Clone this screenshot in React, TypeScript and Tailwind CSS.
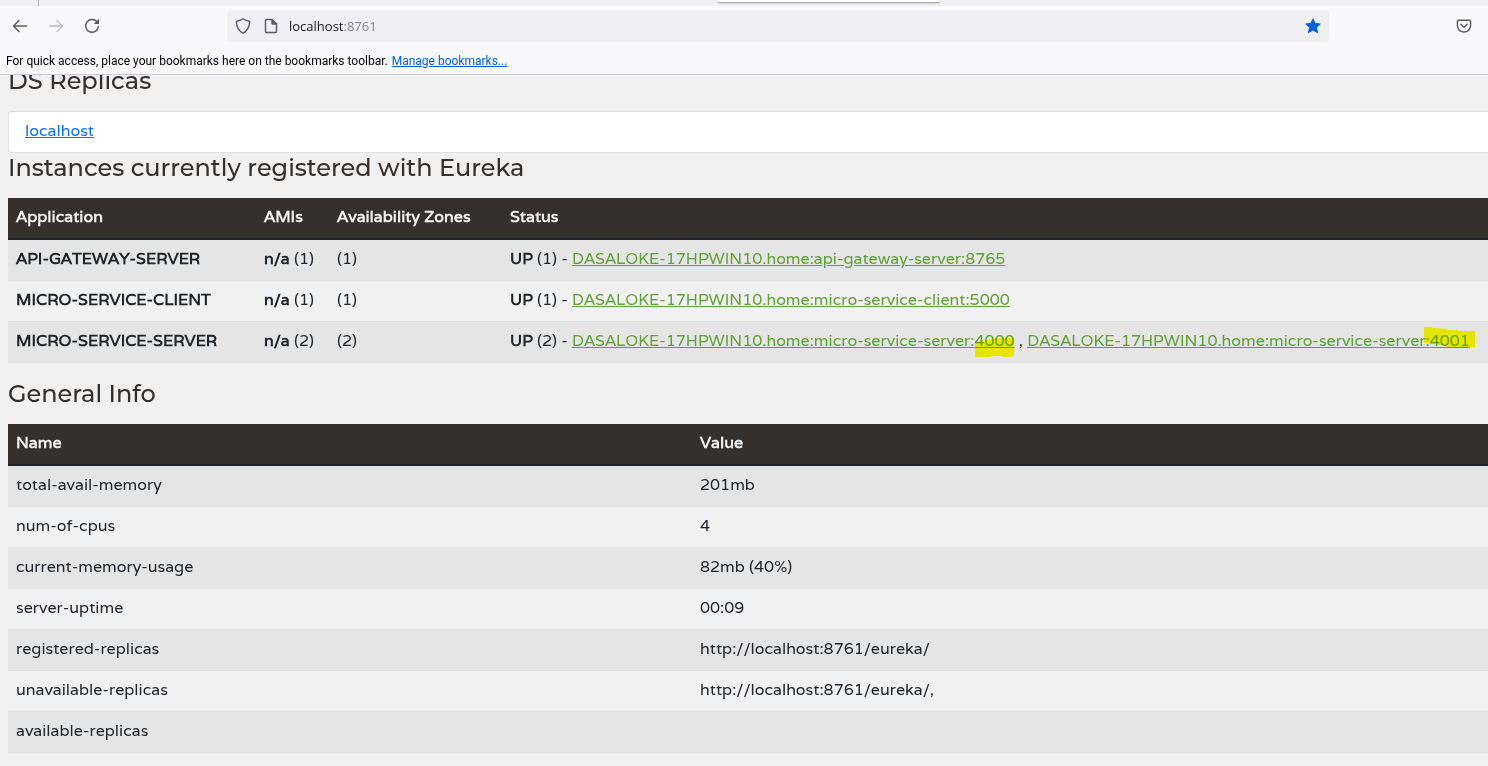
import type { ReactNode } from "react";

type Instance = { label: string; port: string; mark?: "below" | "above" };

const applications: { name: string; count: number; instances: Instance[] }[] = [
  {
    name: "API-GATEWAY-SERVER",
    count: 1,
    instances: [{ label: "DASALOKE-17HPWIN10.home:api-gateway-server:", port: "8765" }],
  },
  {
    name: "MICRO-SERVICE-CLIENT",
    count: 1,
    instances: [{ label: "DASALOKE-17HPWIN10.home:micro-service-client:", port: "5000" }],
  },
  {
    name: "MICRO-SERVICE-SERVER",
    count: 2,
    instances: [
      { label: "DASALOKE-17HPWIN10.home:micro-service-server:", port: "4000", mark: "below" },
      { label: "DASALOKE-17HPWIN10.home:micro-service-server:", port: "4001", mark: "above" },
    ],
  },
];

const generalInfo: [string, string][] = [
  ["total-avail-memory", "201mb"],
  ["num-of-cpus", "4"],
  ["current-memory-usage", "82mb (40%)"],
  ["server-uptime", "00:09"],
  ["registered-replicas", "http://localhost:8761/eureka/"],
  ["unavailable-replicas", "http://localhost:8761/eureka/,"],
  ["available-replicas", ""],
];

function Marker({ kind }: { kind: "below" | "above" }) {
  if (kind === "below") {
    return (
      <svg className="pointer-events-none absolute top-2 left-px h-5 w-10 mix-blend-multiply" viewBox="0 0 40 20" aria-hidden="true">
        <path d="M0 3 L14 2 L14 1 L28 0 L39 0 V17 L36 19 H28 L26 18 H18 L13 19 H0Z" fill="#ffff00" />
      </svg>
    );
  }
  return (
    <svg className="pointer-events-none absolute -top-1 -left-2 h-6 w-14 mix-blend-multiply" viewBox="0 0 56 24" aria-hidden="true">
      <path d="M2 1 L9 1 L11 2 L25 3 V4 L36 4 V5 H53 V21 H45 V22 H27 V21 L22 20 L13 18 H8 V17 H2Z" fill="#ffff00" />
    </svg>
  );
}

function Heading({ children }: { children: ReactNode }) {
  return (
    <h1 className="mb-4 h-[29px] font-[Montserrat,Inter,sans-serif] text-2xl leading-[29px] font-medium whitespace-nowrap text-[#34302d]">
      {children}
    </h1>
  );
}

const th = "border-b-2 border-[#212529] px-2 pt-[7px] pb-[9px] font-bold";
const td = "border-b border-[#dee2e6] px-2 pt-[7px] pb-[9px]";

export default function App() {
  return (
    <div className="flex min-h-screen flex-col overflow-hidden bg-[#f1f1f1] font-[Varela,'Noto_Sans',sans-serif] text-base text-[#212529]">
      <header className="border-b border-[#ccccce] bg-[#f9f9fb] text-[#15141a]">
        <div className="flex h-1.5 bg-[#f0f0f4]">
          <div className="w-[39px] border-r border-[#b0b0b6]" />
          <div className="ml-[679px] h-[2px] w-[222px] rounded-b-sm bg-white shadow-[0_1px_2px_#00000066]" />
        </div>
        <nav className="flex h-10 items-center pr-4 pl-3 text-[#5b5b66]">
          <button type="button" aria-label="Back" className="mr-5">
            <svg className="size-4" viewBox="0 0 16 16" fill="none" stroke="currentColor" strokeWidth="1.5" strokeLinecap="round" strokeLinejoin="round">
              <path d="M14.5 8H1.5M7 2.5L1.5 8L7 13.5" />
            </svg>
          </button>
          <button type="button" aria-label="Forward" disabled className="mr-5 text-[#bfbfc5]">
            <svg className="size-4" viewBox="0 0 16 16" fill="none" stroke="currentColor" strokeWidth="1.5" strokeLinecap="round" strokeLinejoin="round">
              <path d="M1.5 8H14.5M9 2.5L14.5 8L9 13.5" />
            </svg>
          </button>
          <button type="button" aria-label="Reload" className="mr-[127px]">
            <svg className="size-4" viewBox="0 0 16 16" fill="none">
              <path d="M12.9 3.6A6.4 6.4 0 1 0 14.4 8.6" stroke="currentColor" strokeWidth="1.5" strokeLinecap="round" />
              <path d="M15 .8V5.6a.5.5 0 0 1-.5.5H9.7Z" fill="currentColor" />
            </svg>
          </button>
          <div className="mr-[127px] flex h-8 flex-1 items-center rounded-sm bg-[#f0f0f4] px-2">
            <svg className="mr-3 size-4" viewBox="0 0 16 16" fill="none" stroke="currentColor" strokeWidth="1.4" strokeLinejoin="round" aria-hidden="true">
              <path d="M8 .8C9.800 2.100 12 3 14.500 3.300C14.800 8.600 12.400 12.600 8 15.200C3.600 12.600 1.200 8.600 1.500 3.300C4 3 6.200 2.100 8 .8Z" />
            </svg>
            <svg className="size-4" viewBox="0 0 16 16" fill="none" stroke="currentColor" strokeWidth="1.5" strokeLinejoin="round" aria-hidden="true">
              <path d="M3.500 1.500H9L13.500 6V13.500A1 1 0 0 1 12.500 14.500H3.500A1 1 0 0 1 2.500 13.500V2.500A1 1 0 0 1 3.500 1.500Z" />
              <path d="M9 1.500V5.500A.5.5 0 0 0 9.500 6H13.500Z" fill="currentColor" />
            </svg>
            <div className="flex-1 pt-0.5 pl-2.5 font-['Open_Sans',sans-serif] text-[13px] text-[#15141a]">
              localhost<span className="text-[#85858c]">:8761</span>
            </div>
            <button type="button" aria-label="Edit bookmark" className="text-[#0061e0]">
              <svg className="size-4" viewBox="0 0 16 16" fill="currentColor" stroke="currentColor" strokeWidth="1" strokeLinejoin="round">
                <path d="M8 .8L10.200 5.400L15.300 6L11.500 9.500L12.600 14.700L8 12.100L3.400 14.700L4.500 9.500L.7 6L5.800 5.400Z" />
              </svg>
            </button>
          </div>
          <button type="button" aria-label="Save to Pocket">
            <svg className="size-4" viewBox="0 0 16 16" fill="none" stroke="currentColor" strokeWidth="1.5" strokeLinecap="round" strokeLinejoin="round">
              <path d="M2.700 2.200H13.300A1.500 1.500 0 0 1 14.600 3.700V7.500A6.600 6.600 0 0 1 1.400 7.500V3.700A1.500 1.500 0 0 1 2.700 2.200Z" />
              <path d="M4.800 6.200L8 9.200L11.200 6.200" />
            </svg>
          </button>
        </nav>
        <p className="flex h-7 items-center gap-1 px-1.5 pt-0.5 font-[Roboto,sans-serif] text-xs whitespace-nowrap text-black">
          For quick access, place your bookmarks here on the bookmarks toolbar.
          <a href="#bookmarks" className="text-[#0061e0] underline">Manage bookmarks...</a>
        </p>
      </header>

      <main className="flex-1 overflow-hidden pl-2">
        <div className="-mt-[9px]">
          <Heading>DS Replicas</Heading>
          <ul className="rounded-l border border-r-0 border-[#dfdfdf] bg-white">
            <li className="px-4 pt-[7px] pb-[9px]">
              <a href="#localhost" className="text-[#0d6efd] underline">localhost</a>
            </li>
          </ul>

          <Heading>Instances currently registered with Eureka</Heading>
          <table className="mb-4 w-full border-separate border-spacing-0 text-left whitespace-nowrap">
            <thead className="bg-[#34302d] text-[#f1f1f1]">
              <tr>
                <th className={th + " w-[248px]"}>Application</th>
                <th className={th + " w-[73px]"}>AMIs</th>
                <th className={th + " w-[173px]"}>Availability Zones</th>
                <th className={th}>Status</th>
              </tr>
            </thead>
            <tbody>
              {applications.map((app) => (
                <tr key={app.name} className="odd:bg-[#e5e5e5]">
                  <td className={td + " font-bold"}>{app.name}</td>
                  <td className={td}><b>n/a</b> ({app.count})</td>
                  <td className={td}>({app.count})</td>
                  <td className={td}>
                    <b>UP</b> ({app.count}) -{" "}
                    {app.instances.map((instance, i) => (
                      <span key={instance.port}>
                        {i > 0 && " , "}
                        <a href="#instance" className="text-[#5fa134] underline">
                          {instance.label}
                          <span className="relative">
                            {instance.port}
                            {instance.mark && <Marker kind={instance.mark} />}
                          </span>
                        </a>
                      </span>
                    ))}
                  </td>
                </tr>
              ))}
            </tbody>
          </table>

          <Heading>General Info</Heading>
          <table className="mb-3 w-full border-separate border-spacing-0 text-left">
            <thead className="bg-[#34302d] text-[#f1f1f1]">
              <tr>
                <th className={th + " w-[684px]"}>Name</th>
                <th className={th}>Value</th>
              </tr>
            </thead>
            <tbody>
              {generalInfo.map(([name, value]) => (
                <tr key={name} className="odd:bg-[#e5e5e5]">
                  <td className={td}>{name}</td>
                  <td className={td}>{value}</td>
                </tr>
              ))}
            </tbody>
          </table>
        </div>
      </main>
    </div>
  );
}
